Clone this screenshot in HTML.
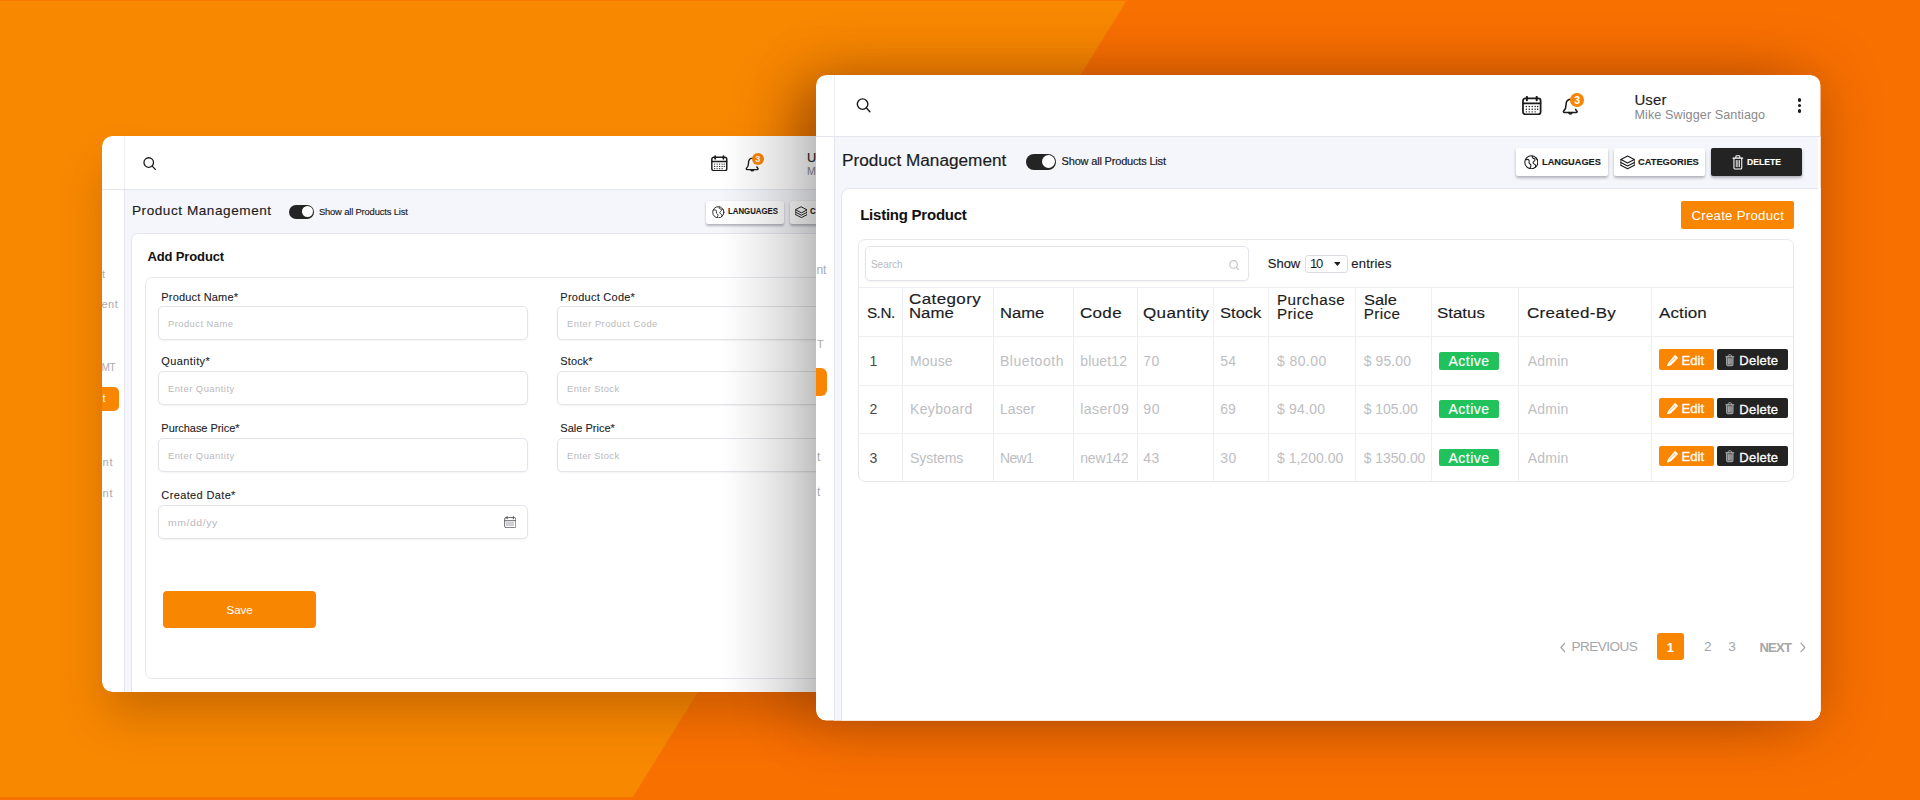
<!DOCTYPE html>
<html lang="en">
<head>
<meta charset="utf-8">
<title>Product Management</title>
<style>
*{box-sizing:border-box;margin:0;padding:0}
html,body{width:1920px;height:800px;overflow:hidden}
body{position:relative;background:#F88800;font-family:"Liberation Sans",sans-serif;color:#1c1c1e}
.b{position:absolute;display:block}
.t{position:absolute;white-space:nowrap;line-height:1;display:block}
.bgR{position:absolute;left:0;top:0;width:1920px;height:800px;background:#F87000;clip-path:polygon(1127px 0,1920px 0,1920px 800px,631px 800px)}
.bgB{position:absolute;left:0;top:797px;width:636px;height:3px;background:#F87000}
.bgT{position:absolute;left:0;top:0;width:1128px;height:1px;background:#F87600}
.shL{position:absolute;left:102px;top:136px;width:714px;height:556px;border-radius:10px 0 0 10px;box-shadow:0 28px 46px -5px rgba(115,48,0,.33)}
.shR{position:absolute;left:816px;top:75px;width:1004px;height:645px;border-radius:10px;box-shadow:-38px 2px 52px -12px rgba(95,32,0,.37),0 3px 60px rgba(100,35,0,.40)}
.clipL{position:absolute;left:0;top:0;width:816px;height:800px;clip-path:inset(136px 0 108px 102px round 10px 0 0 10px)}
.winR{position:absolute;left:0;top:0;width:1920px;height:800px;clip-path:inset(75px 99.5px 79.5px 816px round 10px)}
</style>
</head>
<body>
<div class="bgR"></div>
<div class="bgB"></div>
<div class="bgT"></div>
<div class="shR"></div>
<div class="shL"></div>
<!-- ================= LEFT WINDOW : Add Product ================= -->
<div class="clipL">
<div class="b" style="left:102px;top:136px;width:738px;height:556px;background:#fff;border-radius:10px 0 0 10px"></div>
<div class="b" style="left:124px;top:190px;width:716px;height:502px;background:#F5F6FB"></div>
<div class="b" style="left:124px;top:136px;width:1px;height:54px;background:#eeeef3"></div>
<div class="b" style="left:124px;top:190px;width:1px;height:502px;background:#e4e5ee"></div>
<div class="b" style="left:102px;top:189px;width:738px;height:1px;background:#e4e5ee"></div>
<span class="t" style="left:102.06px;top:268.69px;font-size:11px;color:#a9a9ae;letter-spacing:0.10px;">t</span>
<span class="t" style="left:101.56px;top:298.69px;font-size:11px;color:#a9a9ae;letter-spacing:0.45px;">ent</span>
<span class="t" style="left:101.60px;top:362.54px;font-size:10px;color:#a9a9ae;letter-spacing:-0.43px;">MT</span>
<div class="b" style="left:102px;top:387px;width:17px;height:24px;background:#F88600;border-radius:0 5px 5px 0"></div>
<span class="t" style="left:102.56px;top:393.19px;font-size:11px;color:#fff;letter-spacing:0.60px;">t</span>
<span class="t" style="left:102.56px;top:457.19px;font-size:11px;color:#a9a9ae;letter-spacing:0.74px;">nt</span>
<span class="t" style="left:102.56px;top:487.69px;font-size:11px;color:#a9a9ae;letter-spacing:0.74px;">nt</span>
<svg class="b" style="left:143.3px;top:156.8px;" width="13.3" height="13.2" viewBox="0 0 17 17.4" fill="none" stroke-linecap="round" stroke-linejoin="round"><circle cx="7.3" cy="7.3" r="6.3" stroke="#1c1c1e" stroke-width="1.7"/><path d="M11.9 12L16 16.4" stroke="#1c1c1e" stroke-width="1.7"/></svg>
<svg class="b" style="left:711px;top:154.6px;" width="16.6" height="16.8" viewBox="0 0 20 19.6" fill="none" stroke-linecap="round" stroke-linejoin="round"><rect x="1" y="2.4" width="18" height="16.2" rx="2.4" stroke="#1c1c1e" stroke-width="1.8"/><path d="M1.2 7.4H18.8" stroke="#1c1c1e" stroke-width="1.8"/><path d="M5 0.9V4.3M15 0.9V4.3" stroke="#1c1c1e" stroke-width="2.1"/><circle cx="4.4" cy="10.6" r="0.75" fill="#1c1c1e"/><circle cx="7.4" cy="10.6" r="0.75" fill="#1c1c1e"/><circle cx="10.4" cy="10.6" r="0.75" fill="#1c1c1e"/><circle cx="13.4" cy="10.6" r="0.75" fill="#1c1c1e"/><circle cx="16.0" cy="10.6" r="0.75" fill="#1c1c1e"/><circle cx="4.4" cy="13.4" r="0.75" fill="#1c1c1e"/><circle cx="7.4" cy="13.4" r="0.75" fill="#1c1c1e"/><circle cx="10.4" cy="13.4" r="0.75" fill="#1c1c1e"/><circle cx="13.4" cy="13.4" r="0.75" fill="#1c1c1e"/><circle cx="16.0" cy="13.4" r="0.75" fill="#1c1c1e"/><circle cx="4.4" cy="16.1" r="0.75" fill="#1c1c1e"/><circle cx="7.4" cy="16.1" r="0.75" fill="#1c1c1e"/><circle cx="10.4" cy="16.1" r="0.75" fill="#1c1c1e"/><circle cx="13.4" cy="16.1" r="0.75" fill="#1c1c1e"/></svg>
<svg class="b" style="left:745px;top:156.6px;" width="14.2" height="15.4" viewBox="0 0 16.6 17.4" fill="none" stroke-linecap="round" stroke-linejoin="round"><path d="M8.6 1C5.4 1.3 4.1 3.9 4.1 6.6C4.1 9.9 3.4 11.4 1.8 12.9C1.2 13.5 1.5 14.4 2.4 14.4H14.4C15.3 14.4 15.6 13.5 15 12.9C14.5 12.4 14.1 11.9 13.8 11.3" stroke="#1c1c1e" stroke-width="1.6"/><path d="M6.8 14.6A1.75 1.75 0 0 0 10.2 14.6" stroke="#1c1c1e" stroke-width="1.6"/></svg>
<div class="b" style="left:752px;top:153.3px;width:12px;height:12.0px;background:#F88600;border-radius:50%"></div>
<span class="t" style="left:755.24px;top:155.38px;font-size:9px;color:#fff;font-weight:700;letter-spacing:0.52px;">3</span>
<span class="t" style="left:806.99px;top:152.16px;font-size:12.8px;color:#1c1c1e;letter-spacing:0.06px;-webkit-text-stroke:0.1px;">User</span>
<span class="t" style="left:807.08px;top:166.03px;font-size:10.6px;color:#8a8a8e;letter-spacing:0.13px;">Mike Swigger Santiago</span>
<span class="t" style="left:131.96px;top:203.99px;font-size:13.6px;color:#1c1c1e;letter-spacing:0.54px;-webkit-text-stroke:0.15px;">Product Management</span>
<div class="b" style="left:288.8px;top:205px;width:25.5px;height:13.8px;background:#242424;border-radius:7px"><div class="b" style="right:1.4px;top:1.4px;width:11px;height:11px;border-radius:50%;background:#fff"></div></div>
<span class="t" style="left:318.92px;top:207.04px;font-size:9.4px;color:#1c1c1e;letter-spacing:-0.16px;-webkit-text-stroke:0.15px;">Show all Products List</span>
<div class="b" style="left:706.3px;top:200.5px;width:77.5px;height:23.3px;background:#fff;border-radius:2px;box-shadow:0 1.5px 2.5px rgba(40,40,60,.32)"></div>
<svg class="b" style="left:712.4px;top:205.6px;" width="12.6" height="12.6" viewBox="0 0 16 16" fill="none" stroke-linecap="round" stroke-linejoin="round"><circle cx="8" cy="8" r="7.1" stroke="#1c1c1e" stroke-width="1.15"/><path d="M2.2 5.2C3.6 4.6 5 4.9 5.6 6C6.1 7 5.2 7.8 5.6 8.9C6 9.9 7.4 9.9 7.6 11.2C7.8 12.4 6.9 13.4 6.4 14.6" stroke="#1c1c1e" stroke-width="1.15"/><path d="M9.2 1.2C8.6 2.4 9.3 3.4 10.5 3.7C11.9 4 12.4 5 11.8 6.1C11.3 7 10 7.1 9.9 8.3C9.8 9.5 11.1 9.8 12 10.4C12.9 11 12.9 12.2 12.4 13.4" stroke="#1c1c1e" stroke-width="1.15"/><path d="M13.2 3.4C13.8 4.6 14.6 5 15 5.4" stroke="#1c1c1e" stroke-width="1.15"/></svg>
<span class="t" style="left:727.66px;top:207.39px;font-size:8.4px;color:#1c1c1e;font-weight:700;transform:scaleX(0.934);transform-origin:0 50%;-webkit-text-stroke:0.1px;">LANGUAGES</span>
<div class="b" style="left:789.5px;top:200.5px;width:77.5px;height:23.3px;background:#fff;border-radius:2px;box-shadow:0 1.5px 2.5px rgba(40,40,60,.32)"></div>
<svg class="b" style="left:794.5px;top:205.8px;" width="12.8" height="12.6" viewBox="0 0 16 15.2" fill="none" stroke-linecap="round" stroke-linejoin="round"><path d="M8 0.9L15.1 4.6L8 8.3L0.9 4.6Z" stroke="#1c1c1e" stroke-width="1.2"/><path d="M0.9 7.6L8 11.3L15.1 7.6" stroke="#1c1c1e" stroke-width="1.2"/><path d="M0.9 10.6L8 14.3L15.1 10.6" stroke="#1c1c1e" stroke-width="1.2"/><path d="M0.9 4.6V10.6M15.1 4.6V10.6" stroke="#1c1c1e" stroke-width="0.84"/></svg>
<span class="t" style="left:809.66px;top:207.39px;font-size:8.4px;color:#1c1c1e;font-weight:700;transform:scaleX(0.940);transform-origin:0 50%;-webkit-text-stroke:0.1px;">CATEGORIES</span>
<div class="b" style="left:131px;top:233px;width:729px;height:467px;background:#fff;border:1px solid #e4e5ee;border-radius:7px 0 0 0"></div>
<span class="t" style="left:147.48px;top:249.50px;font-size:13px;color:#111;font-weight:700;letter-spacing:-0.13px;">Add Product</span>
<div class="b" style="left:144.5px;top:276.5px;width:715.5px;height:402.5px;background:#fff;border:1px solid #e7e7ee;border-radius:7px"></div>
<span class="t" style="left:161.36px;top:291.89px;font-size:11px;color:#1c1c1e;letter-spacing:0.17px;-webkit-text-stroke:0.1px;">Product Name*</span>
<div class="b" style="left:157.5px;top:306.2px;width:370.0px;height:34.2px;background:#fff;border:1px solid #e3e3e9;border-radius:5px;box-shadow:0 1px 2px rgba(0,0,0,.05)"></div>
<span class="t" style="left:167.92px;top:319.24px;font-size:9.4px;color:#b9b9bd;letter-spacing:0.47px;">Product Name</span>
<span class="t" style="left:161.36px;top:355.89px;font-size:11px;color:#1c1c1e;letter-spacing:0.40px;-webkit-text-stroke:0.1px;">Quantity*</span>
<div class="b" style="left:157.5px;top:370.7px;width:370.0px;height:34.2px;background:#fff;border:1px solid #e3e3e9;border-radius:5px;box-shadow:0 1px 2px rgba(0,0,0,.05)"></div>
<span class="t" style="left:167.92px;top:383.74px;font-size:9.4px;color:#b9b9bd;letter-spacing:0.49px;">Enter Quantity</span>
<span class="t" style="left:161.36px;top:423.19px;font-size:11px;color:#1c1c1e;letter-spacing:-0.05px;-webkit-text-stroke:0.1px;">Purchase Price*</span>
<div class="b" style="left:157.5px;top:438px;width:370.0px;height:34.2px;background:#fff;border:1px solid #e3e3e9;border-radius:5px;box-shadow:0 1px 2px rgba(0,0,0,.05)"></div>
<span class="t" style="left:167.92px;top:451.04px;font-size:9.4px;color:#b9b9bd;letter-spacing:0.49px;">Enter Quantity</span>
<span class="t" style="left:161.36px;top:490.19px;font-size:11px;color:#1c1c1e;letter-spacing:0.36px;-webkit-text-stroke:0.1px;">Created Date*</span>
<div class="b" style="left:157.5px;top:505px;width:370.0px;height:34.2px;background:#fff;border:1px solid #e3e3e9;border-radius:5px;box-shadow:0 1px 2px rgba(0,0,0,.05)"></div>
<span class="t" style="left:167.92px;top:518.04px;font-size:9.4px;color:#b9b9bd;letter-spacing:0.47px;transform:scaleX(1.120);transform-origin:0 50%;">mm/dd/yy</span>
<svg class="b" style="left:503.8px;top:515.6px;" width="12.5" height="12.4" viewBox="0 0 20 19.6" fill="none" stroke-linecap="round" stroke-linejoin="round"><rect x="1" y="2.4" width="18" height="16.2" rx="2.4" stroke="#5d5d63" stroke-width="1.5"/><path d="M1.2 7.4H18.8" stroke="#5d5d63" stroke-width="1.5"/><path d="M5 0.9V4.3M15 0.9V4.3" stroke="#5d5d63" stroke-width="1.8"/></svg>
<div class="b" style="left:506px;top:521.5px;width:8px;height:4.0px;background:#cfcfd4"></div>
<span class="t" style="left:560.36px;top:291.89px;font-size:11px;color:#1c1c1e;letter-spacing:0.25px;-webkit-text-stroke:0.1px;">Product Code*</span>
<div class="b" style="left:556.8px;top:306.2px;width:370.0px;height:34.2px;background:#fff;border:1px solid #e3e3e9;border-radius:5px;box-shadow:0 1px 2px rgba(0,0,0,.05)"></div>
<span class="t" style="left:567.12px;top:319.24px;font-size:9.4px;color:#b9b9bd;letter-spacing:0.46px;">Enter Product Code</span>
<span class="t" style="left:560.36px;top:356.39px;font-size:11px;color:#1c1c1e;letter-spacing:0.09px;-webkit-text-stroke:0.1px;">Stock*</span>
<div class="b" style="left:556.8px;top:370.5px;width:370.0px;height:34.2px;background:#fff;border:1px solid #e3e3e9;border-radius:5px;box-shadow:0 1px 2px rgba(0,0,0,.05)"></div>
<span class="t" style="left:567.12px;top:383.54px;font-size:9.4px;color:#b9b9bd;letter-spacing:0.35px;">Enter Stock</span>
<span class="t" style="left:560.36px;top:423.19px;font-size:11px;color:#1c1c1e;-webkit-text-stroke:0.1px;">Sale Price*</span>
<div class="b" style="left:556.8px;top:437.5px;width:370.0px;height:34.2px;background:#fff;border:1px solid #e3e3e9;border-radius:5px;box-shadow:0 1px 2px rgba(0,0,0,.05)"></div>
<span class="t" style="left:567.12px;top:450.54px;font-size:9.4px;color:#b9b9bd;letter-spacing:0.35px;">Enter Stock</span>
<div class="b" style="left:163.2px;top:590.8px;width:153.3px;height:37.5px;background:#F88600;border-radius:4px"></div>
<span class="t" style="left:226.54px;top:604.48px;font-size:11.6px;color:#fff;letter-spacing:-0.06px;">Save</span>
<div class="b" style="left:720px;top:136px;width:96px;height:556px;background:linear-gradient(90deg,rgba(0,0,0,0) 0%,rgba(0,0,0,.03) 22%,rgba(0,0,0,.08) 47%,rgba(0,0,0,.145) 72%,rgba(0,0,0,.25) 100%)"></div>
</div>
<!-- ================= RIGHT WINDOW : Listing Product ================= -->
<div class="winR">
<div class="b" style="left:816px;top:75px;width:1004.5px;height:645.5px;background:#fff;border-radius:10px"></div>
<div class="b" style="left:834px;top:137px;width:983.5px;height:583.5px;background:#F5F6FB"></div>
<div class="b" style="left:833.5px;top:75px;width:1.0px;height:62px;background:#eeeef3"></div>
<div class="b" style="left:833.5px;top:137px;width:1.0px;height:583.5px;background:#e4e5ee"></div>
<div class="b" style="left:816px;top:136px;width:1004.5px;height:1px;background:#e4e5ee"></div>
<span class="t" style="left:816.52px;top:264.34px;font-size:12px;color:#a9a9ae;letter-spacing:-0.15px;">nt</span>
<span class="t" style="left:817.06px;top:339.19px;font-size:11px;color:#a9a9ae;letter-spacing:-1.07px;">T</span>
<div class="b" style="left:816px;top:367.5px;width:11px;height:28.3px;background:#F88600;border-radius:0 6px 6px 0"></div>
<span class="t" style="left:817.02px;top:450.84px;font-size:12px;color:#a9a9ae;letter-spacing:0.88px;">t</span>
<span class="t" style="left:817.02px;top:486.34px;font-size:12px;color:#a9a9ae;letter-spacing:0.88px;">t</span>
<svg class="b" style="left:856.2px;top:98px;" width="15.2" height="14.6" viewBox="0 0 17 17.4" fill="none" stroke-linecap="round" stroke-linejoin="round"><circle cx="7.3" cy="7.3" r="6.3" stroke="#1c1c1e" stroke-width="1.7"/><path d="M11.9 12L16 16.4" stroke="#1c1c1e" stroke-width="1.7"/></svg>
<svg class="b" style="left:1522.2px;top:95.8px;" width="19.6" height="19.4" viewBox="0 0 20 19.6" fill="none" stroke-linecap="round" stroke-linejoin="round"><rect x="1" y="2.4" width="18" height="16.2" rx="2.4" stroke="#1c1c1e" stroke-width="1.8"/><path d="M1.2 7.4H18.8" stroke="#1c1c1e" stroke-width="1.8"/><path d="M5 0.9V4.3M15 0.9V4.3" stroke="#1c1c1e" stroke-width="2.1"/><circle cx="4.4" cy="10.6" r="0.75" fill="#1c1c1e"/><circle cx="7.4" cy="10.6" r="0.75" fill="#1c1c1e"/><circle cx="10.4" cy="10.6" r="0.75" fill="#1c1c1e"/><circle cx="13.4" cy="10.6" r="0.75" fill="#1c1c1e"/><circle cx="16.0" cy="10.6" r="0.75" fill="#1c1c1e"/><circle cx="4.4" cy="13.4" r="0.75" fill="#1c1c1e"/><circle cx="7.4" cy="13.4" r="0.75" fill="#1c1c1e"/><circle cx="10.4" cy="13.4" r="0.75" fill="#1c1c1e"/><circle cx="13.4" cy="13.4" r="0.75" fill="#1c1c1e"/><circle cx="16.0" cy="13.4" r="0.75" fill="#1c1c1e"/><circle cx="4.4" cy="16.1" r="0.75" fill="#1c1c1e"/><circle cx="7.4" cy="16.1" r="0.75" fill="#1c1c1e"/><circle cx="10.4" cy="16.1" r="0.75" fill="#1c1c1e"/><circle cx="13.4" cy="16.1" r="0.75" fill="#1c1c1e"/></svg>
<svg class="b" style="left:1562px;top:97.6px;" width="16.4" height="17.6" viewBox="0 0 16.6 17.4" fill="none" stroke-linecap="round" stroke-linejoin="round"><path d="M8.6 1C5.4 1.3 4.1 3.9 4.1 6.6C4.1 9.9 3.4 11.4 1.8 12.9C1.2 13.5 1.5 14.4 2.4 14.4H14.4C15.3 14.4 15.6 13.5 15 12.9C14.5 12.4 14.1 11.9 13.8 11.3" stroke="#1c1c1e" stroke-width="1.6"/><path d="M6.8 14.6A1.75 1.75 0 0 0 10.2 14.6" stroke="#1c1c1e" stroke-width="1.6"/></svg>
<div class="b" style="left:1570.4px;top:93.4px;width:13.7px;height:13.7px;background:#F88600;border-radius:50%"></div>
<span class="t" style="left:1574.18px;top:95.31px;font-size:10.5px;color:#fff;font-weight:700;letter-spacing:0.19px;">3</span>
<span class="t" style="left:1634.40px;top:92.30px;font-size:15px;color:#1c1c1e;letter-spacing:0.13px;-webkit-text-stroke:0.15px;">User</span>
<span class="t" style="left:1634.50px;top:109.33px;font-size:12.6px;color:#8a8a8e;letter-spacing:0.09px;">Mike Swigger Santiago</span>
<div class="b" style="left:1797.6px;top:98.1px;width:3.8px;height:3.8px;border-radius:50%;background:#1c1c1e"></div><div class="b" style="left:1797.6px;top:103.69999999999999px;width:3.8px;height:3.8px;border-radius:50%;background:#1c1c1e"></div><div class="b" style="left:1797.6px;top:109.3px;width:3.8px;height:3.8px;border-radius:50%;background:#1c1c1e"></div>
<span class="t" style="left:842.36px;top:152.76px;font-size:16px;color:#1c1c1e;transform:scaleX(1.074);transform-origin:0 50%;-webkit-text-stroke:0.18px;">Product Management</span>
<div class="b" style="left:1026.3px;top:153.8px;width:30.0px;height:16.2px;background:#242424;border-radius:8.2px"><div class="b" style="right:1.6px;top:1.6px;width:13px;height:13px;border-radius:50%;background:#fff"></div></div>
<span class="t" style="left:1061.56px;top:156.49px;font-size:11px;color:#1c1c1e;letter-spacing:-0.18px;-webkit-text-stroke:0.2px;">Show all Products List</span>
<div class="b" style="left:1516.3px;top:148px;width:91.3px;height:27.8px;background:#fff;border-radius:2px;box-shadow:0 2px 3px rgba(40,40,60,.34)"></div>
<svg class="b" style="left:1523.7px;top:154.7px;" width="14.6" height="14.6" viewBox="0 0 16 16" fill="none" stroke-linecap="round" stroke-linejoin="round"><circle cx="8" cy="8" r="7.1" stroke="#1c1c1e" stroke-width="1.15"/><path d="M2.2 5.2C3.6 4.6 5 4.9 5.6 6C6.1 7 5.2 7.8 5.6 8.9C6 9.9 7.4 9.9 7.6 11.2C7.8 12.4 6.9 13.4 6.4 14.6" stroke="#1c1c1e" stroke-width="1.15"/><path d="M9.2 1.2C8.6 2.4 9.3 3.4 10.5 3.7C11.9 4 12.4 5 11.8 6.1C11.3 7 10 7.1 9.9 8.3C9.8 9.5 11.1 9.8 12 10.4C12.9 11 12.9 12.2 12.4 13.4" stroke="#1c1c1e" stroke-width="1.15"/><path d="M13.2 3.4C13.8 4.6 14.6 5 15 5.4" stroke="#1c1c1e" stroke-width="1.15"/></svg>
<span class="t" style="left:1541.61px;top:157.00px;font-size:9.8px;color:#1c1c1e;font-weight:700;transform:scaleX(0.941);transform-origin:0 50%;-webkit-text-stroke:0.15px;">LANGUAGES</span>
<div class="b" style="left:1613.9px;top:148px;width:91.1px;height:27.8px;background:#fff;border-radius:2px;box-shadow:0 2px 3px rgba(40,40,60,.34)"></div>
<svg class="b" style="left:1619.8px;top:154.8px;" width="15.2" height="14.8" viewBox="0 0 16 15.2" fill="none" stroke-linecap="round" stroke-linejoin="round"><path d="M8 0.9L15.1 4.6L8 8.3L0.9 4.6Z" stroke="#1c1c1e" stroke-width="1.2"/><path d="M0.9 7.6L8 11.3L15.1 7.6" stroke="#1c1c1e" stroke-width="1.2"/><path d="M0.9 10.6L8 14.3L15.1 10.6" stroke="#1c1c1e" stroke-width="1.2"/><path d="M0.9 4.6V10.6M15.1 4.6V10.6" stroke="#1c1c1e" stroke-width="0.84"/></svg>
<span class="t" style="left:1637.71px;top:157.00px;font-size:9.8px;color:#1c1c1e;font-weight:700;transform:scaleX(0.949);transform-origin:0 50%;-webkit-text-stroke:0.15px;">CATEGORIES</span>
<div class="b" style="left:1710.8px;top:148px;width:91.1px;height:27.9px;background:#232323;border-radius:2px;box-shadow:0 2px 3px rgba(40,40,60,.34)"></div>
<svg class="b" style="left:1731.9px;top:155.2px;" width="11.7" height="14.9" viewBox="0 0 12 15.2" fill="none" stroke-linecap="round" stroke-linejoin="round"><path d="M1 3.2H11M4 3.2V1.6C4 1.1 4.4 0.8 4.9 0.8H7.1C7.6 0.8 8 1.1 8 1.6V3.2" stroke="#fff" stroke-width="1.1"/><path d="M2 3.4V13.2C2 13.9 2.5 14.4 3.2 14.4H8.8C9.5 14.4 10 13.9 10 13.2V3.4" stroke="#fff" stroke-width="1.1" fill="none"/><path d="M4.4 5.6V12M6 5.6V12M7.6 5.6V12" stroke="#fff" stroke-width="0.8800000000000001"/></svg>
<span class="t" style="left:1746.61px;top:157.00px;font-size:9.8px;color:#fff;font-weight:700;transform:scaleX(0.877);transform-origin:0 50%;-webkit-text-stroke:0.15px;">DELETE</span>
<div class="b" style="left:841px;top:187.5px;width:989px;height:542.5px;background:#fff;border:1px solid #e4e5ee;border-radius:8px 0 0 0"></div>
<div class="b" style="left:1817.5px;top:137px;width:3.0px;height:583.5px;background:#fff"></div>
<span class="t" style="left:860.20px;top:206.60px;font-size:15px;color:#111;font-weight:700;letter-spacing:-0.24px;">Listing Product</span>
<div class="b" style="left:1681.3px;top:201.3px;width:113.0px;height:28.0px;background:#F88600;border-radius:2px"></div>
<span class="t" style="left:1691.47px;top:208.83px;font-size:13.2px;color:#fff;letter-spacing:0.28px;">Create Product</span>
<div class="b" style="left:857.5px;top:238.5px;width:936.5px;height:243.5px;background:#fff;border:1px solid #e7e7ee;border-radius:7px"></div>
<div class="b" style="left:864.5px;top:245.5px;width:384.3px;height:35.8px;background:#fff;border:1px solid #e4e4ea;border-radius:5px;box-shadow:0 1px 2px rgba(0,0,0,.05)"></div>
<span class="t" style="left:870.90px;top:259.54px;font-size:10px;color:#b9b9bd;letter-spacing:0.02px;">Search</span>
<svg class="b" style="left:1229px;top:259.6px;" width="10.6" height="10.6" viewBox="0 0 17 17.4" fill="none" stroke-linecap="round" stroke-linejoin="round"><circle cx="7.3" cy="7.3" r="6.3" stroke="#c4c4c8" stroke-width="1.9"/><path d="M11.9 12L16 16.4" stroke="#c4c4c8" stroke-width="1.9"/></svg>
<span class="t" style="left:1267.78px;top:257.30px;font-size:13px;color:#1c1c1e;letter-spacing:-0.01px;-webkit-text-stroke:0.15px;">Show</span>
<div class="b" style="left:1305px;top:255px;width:42.5px;height:17.6px;background:#fff;border:1px solid #dcdce2;border-radius:3px"></div>
<span class="t" style="left:1309.98px;top:257.30px;font-size:13px;color:#1c1c1e;letter-spacing:-1.09px;">10</span>
<svg class="b" style="left:1333.6px;top:262.4px" width="6.8" height="4" viewBox="0 0 6.8 4"><path d="M0 0H6.8L3.4 4Z" fill="#1c1c1e"/></svg>
<span class="t" style="left:1351.28px;top:257.30px;font-size:13px;color:#1c1c1e;letter-spacing:0.21px;-webkit-text-stroke:0.15px;">entries</span>
<div class="b" style="left:858.5px;top:287px;width:934.5px;height:1px;background:#efeff3"></div>
<div class="b" style="left:858.5px;top:336.2px;width:934.5px;height:1.0px;background:#efeff3"></div>
<div class="b" style="left:858.5px;top:384.5px;width:934.5px;height:1.0px;background:#efeff3"></div>
<div class="b" style="left:858.5px;top:433.2px;width:934.5px;height:1.0px;background:#efeff3"></div>
<div class="b" style="left:902px;top:288px;width:1px;height:193px;background:#efeff3"></div>
<div class="b" style="left:992.5px;top:288px;width:1.0px;height:193px;background:#efeff3"></div>
<div class="b" style="left:1073.2px;top:288px;width:1.0px;height:193px;background:#efeff3"></div>
<div class="b" style="left:1136.7px;top:288px;width:1.0px;height:193px;background:#efeff3"></div>
<div class="b" style="left:1212.5px;top:288px;width:1.0px;height:193px;background:#efeff3"></div>
<div class="b" style="left:1268px;top:288px;width:1px;height:193px;background:#efeff3"></div>
<div class="b" style="left:1354.5px;top:288px;width:1.0px;height:193px;background:#efeff3"></div>
<div class="b" style="left:1430.5px;top:288px;width:1.0px;height:193px;background:#efeff3"></div>
<div class="b" style="left:1518.2px;top:288px;width:1.0px;height:193px;background:#efeff3"></div>
<div class="b" style="left:1651.2px;top:288px;width:1.0px;height:193px;background:#efeff3"></div>
<span class="t" style="left:866.89px;top:304.63px;font-size:15.2px;color:#1c1c1e;letter-spacing:-0.41px;-webkit-text-stroke:0.15px;">S.N.</span>
<span class="t" style="left:909.39px;top:290.93px;font-size:15.2px;color:#1c1c1e;letter-spacing:0.35px;transform:scaleX(1.120);transform-origin:0 50%;-webkit-text-stroke:0.15px;">Category</span>
<span class="t" style="left:909.39px;top:304.63px;font-size:15.2px;color:#1c1c1e;transform:scaleX(1.104);transform-origin:0 50%;-webkit-text-stroke:0.15px;">Name</span>
<span class="t" style="left:999.89px;top:304.63px;font-size:15.2px;color:#1c1c1e;transform:scaleX(1.091);transform-origin:0 50%;-webkit-text-stroke:0.15px;">Name</span>
<span class="t" style="left:1080.19px;top:304.63px;font-size:15.2px;color:#1c1c1e;letter-spacing:0.28px;transform:scaleX(1.120);transform-origin:0 50%;-webkit-text-stroke:0.15px;">Code</span>
<span class="t" style="left:1143.19px;top:304.63px;font-size:15.2px;color:#1c1c1e;letter-spacing:0.34px;transform:scaleX(1.120);transform-origin:0 50%;-webkit-text-stroke:0.15px;">Quantity</span>
<span class="t" style="left:1220.19px;top:304.63px;font-size:15.2px;color:#1c1c1e;transform:scaleX(1.090);transform-origin:0 50%;-webkit-text-stroke:0.15px;">Stock</span>
<span class="t" style="left:1276.89px;top:291.63px;font-size:15.2px;color:#1c1c1e;letter-spacing:0.53px;-webkit-text-stroke:0.15px;">Purchase</span>
<span class="t" style="left:1276.89px;top:305.93px;font-size:15.2px;color:#1c1c1e;letter-spacing:0.52px;-webkit-text-stroke:0.15px;">Price</span>
<span class="t" style="left:1363.69px;top:291.63px;font-size:15.2px;color:#1c1c1e;transform:scaleX(1.082);transform-origin:0 50%;-webkit-text-stroke:0.15px;">Sale</span>
<span class="t" style="left:1363.69px;top:305.93px;font-size:15.2px;color:#1c1c1e;letter-spacing:0.40px;-webkit-text-stroke:0.15px;">Price</span>
<span class="t" style="left:1437.39px;top:304.63px;font-size:15.2px;color:#1c1c1e;transform:scaleX(1.113);transform-origin:0 50%;-webkit-text-stroke:0.15px;">Status</span>
<span class="t" style="left:1527.39px;top:304.63px;font-size:15.2px;color:#1c1c1e;letter-spacing:0.28px;transform:scaleX(1.120);transform-origin:0 50%;-webkit-text-stroke:0.15px;">Created-By</span>
<span class="t" style="left:1659.39px;top:304.63px;font-size:15.2px;color:#1c1c1e;letter-spacing:0.09px;transform:scaleX(1.120);transform-origin:0 50%;-webkit-text-stroke:0.15px;">Action</span>
<span class="t" style="left:869.44px;top:353.65px;font-size:14px;color:#4a4a4e;letter-spacing:-1.20px;">1</span>
<span class="t" style="left:909.94px;top:353.65px;font-size:14px;color:#bebec2;letter-spacing:0.16px;">Mouse</span>
<span class="t" style="left:999.94px;top:353.65px;font-size:14px;color:#bebec2;letter-spacing:0.55px;">Bluetooth</span>
<span class="t" style="left:1080.24px;top:353.65px;font-size:14px;color:#bebec2;letter-spacing:0.13px;">bluet12</span>
<span class="t" style="left:1143.24px;top:353.65px;font-size:14px;color:#bebec2;letter-spacing:0.38px;">70</span>
<span class="t" style="left:1220.24px;top:353.65px;font-size:14px;color:#bebec2;letter-spacing:0.13px;">54</span>
<span class="t" style="left:1276.94px;top:353.65px;font-size:14px;color:#bebec2;letter-spacing:0.42px;">$ 80.00</span>
<span class="t" style="left:1363.74px;top:353.65px;font-size:14px;color:#bebec2;letter-spacing:0.09px;">$ 95.00</span>
<span class="t" style="left:1527.74px;top:353.65px;font-size:14px;color:#bebec2;letter-spacing:0.23px;">Admin</span>
<div class="b" style="left:1438.8px;top:352px;width:60.0px;height:17.6px;background:#21C25B;border-radius:2px"></div>
<span class="t" style="left:1448.44px;top:353.95px;font-size:14px;color:#fff;letter-spacing:0.50px;-webkit-text-stroke:0.15px;">Active</span>
<div class="b" style="left:1659px;top:349.4px;width:54.6px;height:20.6px;background:#F88600;border-radius:2px"></div>
<svg class="b" style="left:1667.4px;top:355px;" width="11.0" height="11.4" viewBox="0 0 11.4 12" fill="none" stroke-linecap="round" stroke-linejoin="round"><path d="M8.3 0.9L10.6 3.2L3.9 9.9L0.7 11.4L2.2 8.2L8.3 0.9Z" fill="#fff" stroke="#fff" stroke-width="1.5"/><path d="M2.6 8.6L7.6 3.6" stroke="#F88600" stroke-width="0.6"/><path d="M7.1 2.5L9.2 4.6" stroke="#F88600" stroke-width="0.6"/></svg>
<span class="t" style="left:1681.48px;top:353.70px;font-size:13px;color:#fff;letter-spacing:0.07px;-webkit-text-stroke:0.3px;">Edit</span>
<div class="b" style="left:1717.2px;top:349.4px;width:71.1px;height:20.6px;background:#232323;border-radius:2px"></div>
<svg class="b" style="left:1725.4px;top:354px;" width="9.6" height="12.6" viewBox="0 0 12 15.2" fill="none" stroke-linecap="round" stroke-linejoin="round"><path d="M1 3.2H11M4 3.2V1.6C4 1.1 4.4 0.8 4.9 0.8H7.1C7.6 0.8 8 1.1 8 1.6V3.2" stroke="#bdbdbd" stroke-width="1.1"/><path d="M2 3.4V13.2C2 13.9 2.5 14.4 3.2 14.4H8.8C9.5 14.4 10 13.9 10 13.2V3.4" stroke="#bdbdbd" stroke-width="1.1" fill="#6a6a6a"/><path d="M4.4 5.6V12M6 5.6V12M7.6 5.6V12" stroke="#bdbdbd" stroke-width="0.8800000000000001"/></svg>
<span class="t" style="left:1739.28px;top:354.40px;font-size:13px;color:#fff;letter-spacing:0.25px;-webkit-text-stroke:0.3px;">Delete</span>
<span class="t" style="left:869.44px;top:402.45px;font-size:14px;color:#4a4a4e;letter-spacing:0.54px;">2</span>
<span class="t" style="left:909.94px;top:402.45px;font-size:14px;color:#bebec2;letter-spacing:0.36px;">Keyboard</span>
<span class="t" style="left:999.94px;top:402.45px;font-size:14px;color:#bebec2;letter-spacing:0.06px;">Laser</span>
<span class="t" style="left:1080.24px;top:402.45px;font-size:14px;color:#bebec2;letter-spacing:0.42px;">laser09</span>
<span class="t" style="left:1143.24px;top:402.45px;font-size:14px;color:#bebec2;letter-spacing:0.63px;">90</span>
<span class="t" style="left:1220.24px;top:402.45px;font-size:14px;color:#bebec2;letter-spacing:-0.02px;">69</span>
<span class="t" style="left:1276.94px;top:402.45px;font-size:14px;color:#bebec2;letter-spacing:0.23px;">$ 94.00</span>
<span class="t" style="left:1363.74px;top:402.45px;font-size:14px;color:#bebec2;letter-spacing:-0.06px;">$ 105.00</span>
<span class="t" style="left:1527.74px;top:402.45px;font-size:14px;color:#bebec2;letter-spacing:0.23px;">Admin</span>
<div class="b" style="left:1438.8px;top:400px;width:60.0px;height:17.6px;background:#21C25B;border-radius:2px"></div>
<span class="t" style="left:1448.44px;top:401.95px;font-size:14px;color:#fff;letter-spacing:0.50px;-webkit-text-stroke:0.15px;">Active</span>
<div class="b" style="left:1659px;top:397.5px;width:54.6px;height:20.6px;background:#F88600;border-radius:2px"></div>
<svg class="b" style="left:1667.4px;top:403.1px;" width="11.0" height="11.4" viewBox="0 0 11.4 12" fill="none" stroke-linecap="round" stroke-linejoin="round"><path d="M8.3 0.9L10.6 3.2L3.9 9.9L0.7 11.4L2.2 8.2L8.3 0.9Z" fill="#fff" stroke="#fff" stroke-width="1.5"/><path d="M2.6 8.6L7.6 3.6" stroke="#F88600" stroke-width="0.6"/><path d="M7.1 2.5L9.2 4.6" stroke="#F88600" stroke-width="0.6"/></svg>
<span class="t" style="left:1681.48px;top:401.80px;font-size:13px;color:#fff;letter-spacing:0.07px;-webkit-text-stroke:0.3px;">Edit</span>
<div class="b" style="left:1717.2px;top:397.5px;width:71.1px;height:20.6px;background:#232323;border-radius:2px"></div>
<svg class="b" style="left:1725.4px;top:402.1px;" width="9.6" height="12.6" viewBox="0 0 12 15.2" fill="none" stroke-linecap="round" stroke-linejoin="round"><path d="M1 3.2H11M4 3.2V1.6C4 1.1 4.4 0.8 4.9 0.8H7.1C7.6 0.8 8 1.1 8 1.6V3.2" stroke="#bdbdbd" stroke-width="1.1"/><path d="M2 3.4V13.2C2 13.9 2.5 14.4 3.2 14.4H8.8C9.5 14.4 10 13.9 10 13.2V3.4" stroke="#bdbdbd" stroke-width="1.1" fill="#6a6a6a"/><path d="M4.4 5.6V12M6 5.6V12M7.6 5.6V12" stroke="#bdbdbd" stroke-width="0.8800000000000001"/></svg>
<span class="t" style="left:1739.28px;top:402.50px;font-size:13px;color:#fff;letter-spacing:0.25px;-webkit-text-stroke:0.3px;">Delete</span>
<span class="t" style="left:869.44px;top:450.95px;font-size:14px;color:#4a4a4e;letter-spacing:0.54px;">3</span>
<span class="t" style="left:909.94px;top:450.95px;font-size:14px;color:#bebec2;letter-spacing:-0.05px;">Systems</span>
<span class="t" style="left:999.94px;top:450.95px;font-size:14px;color:#bebec2;letter-spacing:-0.61px;">New1</span>
<span class="t" style="left:1080.24px;top:450.95px;font-size:14px;color:#bebec2;letter-spacing:-0.17px;">new142</span>
<span class="t" style="left:1143.24px;top:450.95px;font-size:14px;color:#bebec2;letter-spacing:0.48px;">43</span>
<span class="t" style="left:1220.24px;top:450.95px;font-size:14px;color:#bebec2;letter-spacing:0.48px;">30</span>
<span class="t" style="left:1276.94px;top:450.95px;font-size:14px;color:#bebec2;letter-spacing:0.02px;">$ 1,200.00</span>
<span class="t" style="left:1363.74px;top:450.95px;font-size:14px;color:#bebec2;letter-spacing:-0.08px;">$ 1350.00</span>
<span class="t" style="left:1527.74px;top:450.95px;font-size:14px;color:#bebec2;letter-spacing:0.23px;">Admin</span>
<div class="b" style="left:1438.8px;top:448.8px;width:60.0px;height:17.6px;background:#21C25B;border-radius:2px"></div>
<span class="t" style="left:1448.44px;top:450.75px;font-size:14px;color:#fff;letter-spacing:0.50px;-webkit-text-stroke:0.15px;">Active</span>
<div class="b" style="left:1659px;top:445.79999999999995px;width:54.6px;height:20.6px;background:#F88600;border-radius:2px"></div>
<svg class="b" style="left:1667.4px;top:451.4px;" width="11.0" height="11.4" viewBox="0 0 11.4 12" fill="none" stroke-linecap="round" stroke-linejoin="round"><path d="M8.3 0.9L10.6 3.2L3.9 9.9L0.7 11.4L2.2 8.2L8.3 0.9Z" fill="#fff" stroke="#fff" stroke-width="1.5"/><path d="M2.6 8.6L7.6 3.6" stroke="#F88600" stroke-width="0.6"/><path d="M7.1 2.5L9.2 4.6" stroke="#F88600" stroke-width="0.6"/></svg>
<span class="t" style="left:1681.48px;top:450.10px;font-size:13px;color:#fff;letter-spacing:0.07px;-webkit-text-stroke:0.3px;">Edit</span>
<div class="b" style="left:1717.2px;top:445.79999999999995px;width:71.1px;height:20.6px;background:#232323;border-radius:2px"></div>
<svg class="b" style="left:1725.4px;top:450.4px;" width="9.6" height="12.6" viewBox="0 0 12 15.2" fill="none" stroke-linecap="round" stroke-linejoin="round"><path d="M1 3.2H11M4 3.2V1.6C4 1.1 4.4 0.8 4.9 0.8H7.1C7.6 0.8 8 1.1 8 1.6V3.2" stroke="#bdbdbd" stroke-width="1.1"/><path d="M2 3.4V13.2C2 13.9 2.5 14.4 3.2 14.4H8.8C9.5 14.4 10 13.9 10 13.2V3.4" stroke="#bdbdbd" stroke-width="1.1" fill="#6a6a6a"/><path d="M4.4 5.6V12M6 5.6V12M7.6 5.6V12" stroke="#bdbdbd" stroke-width="0.8800000000000001"/></svg>
<span class="t" style="left:1739.28px;top:450.80px;font-size:13px;color:#fff;letter-spacing:0.25px;-webkit-text-stroke:0.3px;">Delete</span>
<svg class="b" style="left:1559.6px;top:641.6px;" width="5.8" height="11.0" viewBox="0 0 6 11" fill="none" stroke-linecap="round" stroke-linejoin="round"><path d="M5 1L1 5.5L5 10" stroke="#a6a6aa" stroke-width="1.3"/></svg>
<span class="t" style="left:1571.46px;top:640.49px;font-size:13.6px;color:#a6a6aa;letter-spacing:-0.56px;">PREVIOUS</span>
<div class="b" style="left:1657px;top:633.3px;width:26.8px;height:26.3px;background:#F88600;border-radius:3px"></div>
<span class="t" style="left:1666.78px;top:640.80px;font-size:13px;color:#fff;font-weight:700;letter-spacing:-0.75px;">1</span>
<span class="t" style="left:1703.96px;top:640.49px;font-size:13.6px;color:#a6a6aa;letter-spacing:0.05px;">2</span>
<span class="t" style="left:1728.26px;top:640.49px;font-size:13.6px;color:#a6a6aa;letter-spacing:0.25px;">3</span>
<span class="t" style="left:1759.48px;top:641.00px;font-size:13px;color:#a6a6aa;font-weight:700;letter-spacing:-0.77px;">NEXT</span>
<svg class="b" style="left:1799.8px;top:641.6px;" width="5.8" height="11.0" viewBox="0 0 6 11" fill="none" stroke-linecap="round" stroke-linejoin="round"><path d="M1 1L5 5.5L1 10" stroke="#a6a6aa" stroke-width="1.3"/></svg>
</div>
</body>
</html>
